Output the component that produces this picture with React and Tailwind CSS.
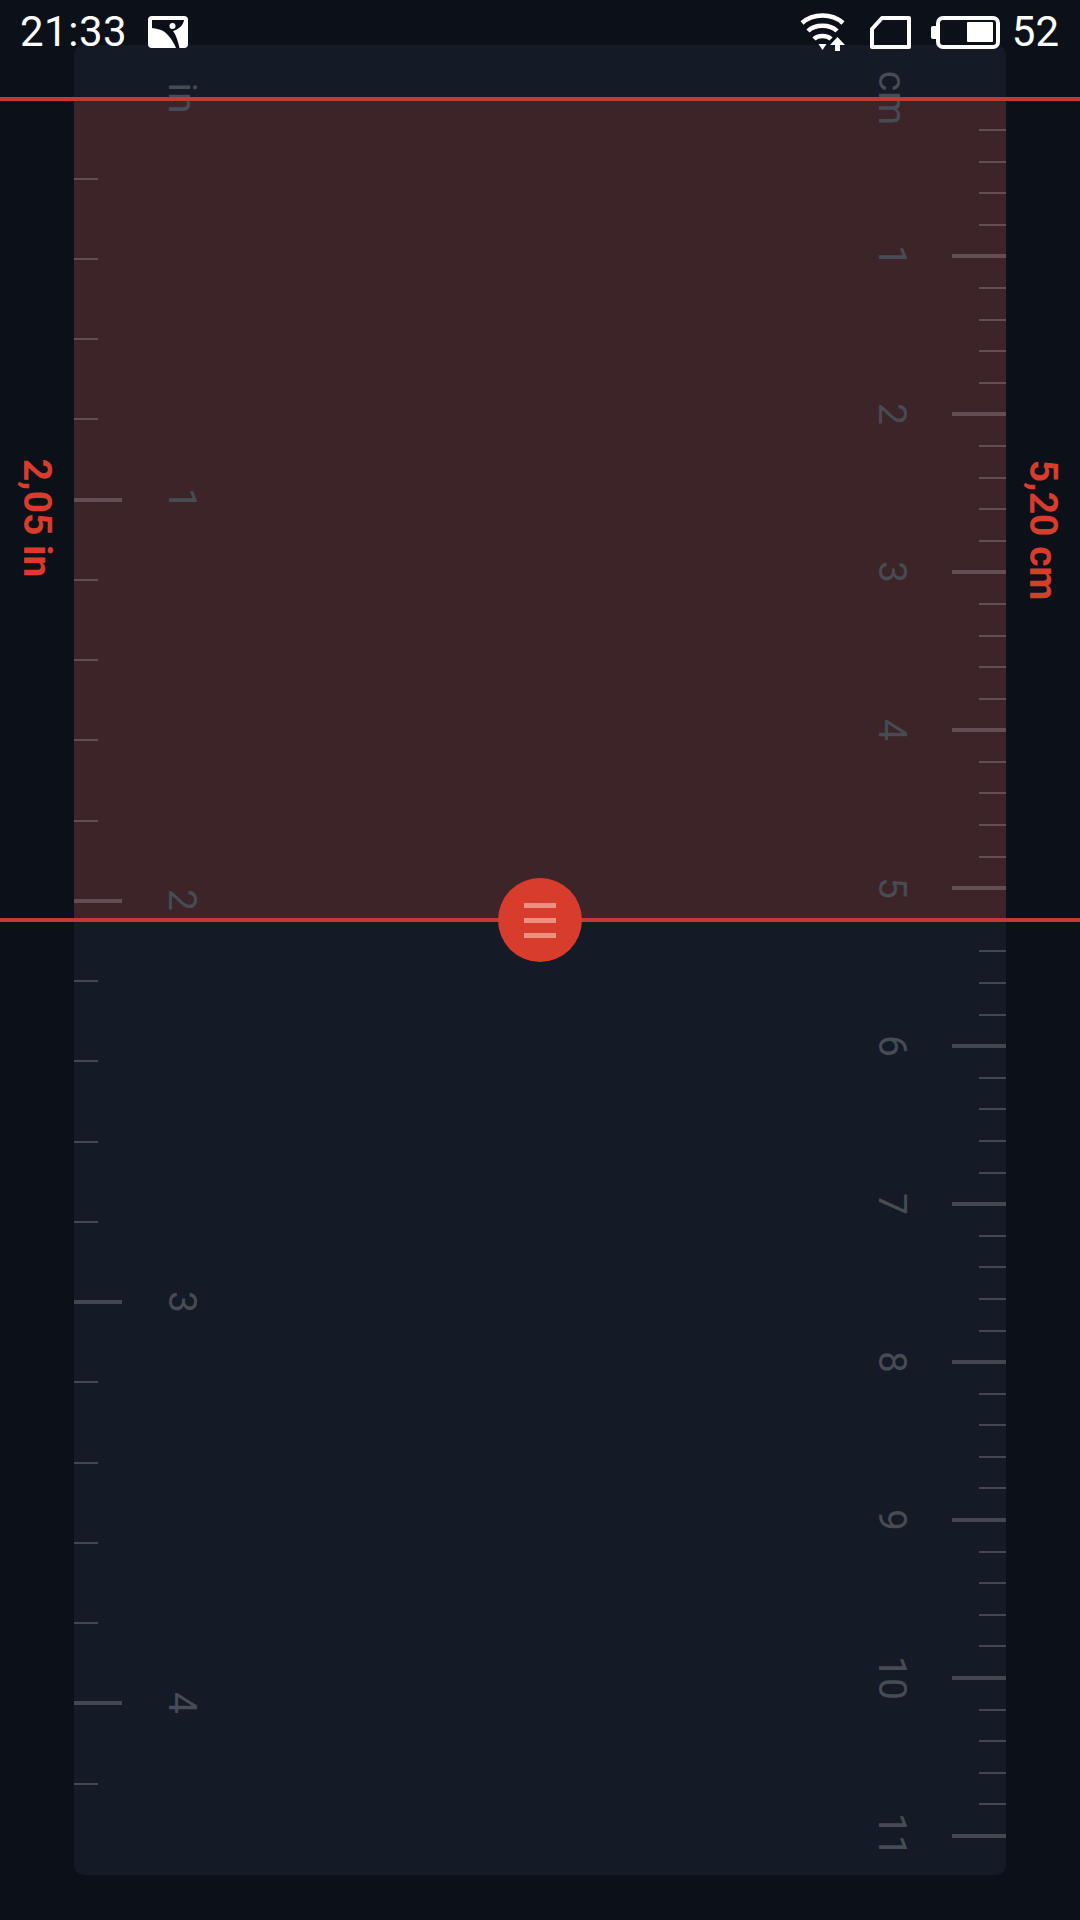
import React from 'react';

const PX_PER_IN = 401.2;
const PX_PER_CM = PX_PER_IN / 2.54;
const ZERO_Y = 53; // zero line, measured from the top of the panel

const inchTicks = Array.from({ length: 22 }, (_, i) => i);
const cmTicks = Array.from({ length: 56 }, (_, i) => i);
const inchLabels = ['in', '1', '2', '3', '4'];
const cmLabels = ['cm', '1', '2', '3', '4', '5', '6', '7', '8', '9', '10', '11'];

const ImageIcon = () => (
  <svg width="40" height="32" viewBox="0 0 40 32" className="block">
    <rect width="40" height="32" rx="4" fill="#fff" />
    <path d="M4 4 H36 C35.500 9 31 13 25 15 C28 19 30 25 31.500 32 H28 C25 25 20 17 13 14 C10 13 7 12.500 4 12 Z" fill="#0b0f17" />
    <circle cx="24.500" cy="10" r="3" fill="#fff" />
  </svg>
);

const WifiIcon = () => (
  <svg width="46" height="38" viewBox="0 0 46 38" className="block" fill="none" stroke="#fff" strokeWidth="4.500">
    <path d="M2 10 C13 0 32 0 43 10" />
    <path d="M8 18 C15 11 30 11 37 18" />
    <path d="M14 26 C18 22 27 22 31 26" />
    <path d="M18.500 31 L26.500 31 L22.500 37 Z" fill="#fff" stroke="none" />
    <path d="M37.500 24 L45 32 L40 32 L40 38 L35 38 L35 32 L30 32 Z" fill="#fff" stroke="none" />
  </svg>
);

const SdIcon = () => (
  <svg width="41" height="33" viewBox="0 0 41 33" className="block" fill="none" stroke="#fff" strokeWidth="4">
    <path d="M2 31 L2 13 L12 2 L39 2 L39 31 Z" strokeLinejoin="round" />
  </svg>
);

const BatteryIcon = () => (
  <div className="flex items-center">
    <div className="w-[5px] h-[13px] bg-white rounded-l-[2px]" />
    <div className="w-[64px] h-[33px] border-[4px] border-white rounded-[7px] flex justify-end items-center pr-[3px]">
      <div className="w-[26px] h-[20px] bg-white rounded-[1px]" />
    </div>
  </div>
);

const StatusBar = () => (
  <div className="absolute top-0 left-0 right-0 h-[66px] pl-[20px] pr-[21px] flex items-center justify-between text-white text-[42px] leading-none z-20 pb-[2px]">
    <div className="flex items-center gap-[21px]">
      <span className="tracking-[0.5px]">21:33</span>
      <ImageIcon />
    </div>
    <div className="flex items-center">
      <WifiIcon />
      <div className="ml-[24px]"><SdIcon /></div>
      <div className="ml-[20px]"><BatteryIcon /></div>
      <span className="ml-[12px]">52</span>
    </div>
  </div>
);

const Tick = ({ y, className }) => (
  <div className={`absolute ${className}`} style={{ top: y }} />
);

const RulerLabel = ({ y, className, children }) => (
  <span
    className={`absolute -translate-x-1/2 -translate-y-1/2 rotate-90 text-[39px] leading-none font-normal text-[#474b54] ${className}`}
    style={{ top: y }}
  >
    {children}
  </span>
);

const SideValue = ({ className, children }) => (
  <span className={`absolute -translate-x-1/2 -translate-y-1/2 rotate-90 whitespace-nowrap text-[39px] leading-none font-bold text-[#d83c2c] ${className}`}>
    {children}
  </span>
);

export default function App() {
  return (
    <div className="relative w-[1080px] h-[1920px] overflow-hidden bg-[#0c1018] font-['Roboto',sans-serif]">
      <StatusBar />

      <div className="h-full pt-[45px] pb-[45px] px-[74px]">
        <div className="relative h-full rounded-[10px] bg-[#141a26] overflow-hidden">
          {/* selected range */}
          <div className="absolute left-0 right-0 top-[53px] h-[822px] bg-[#3c2428]" />

          {inchTicks.map((i) => (
            <Tick
              key={i}
              y={ZERO_Y + (i * PX_PER_IN) / 5 - (i % 5 === 0 ? 1.5 : 0.5)}
              className={i % 5 === 0 ? 'left-0 w-[48px] h-[4px] bg-white/20' : 'left-0 w-[24px] h-[2px] bg-white/20'}
            />
          ))}
          {cmTicks.map((i) => (
            <Tick
              key={i}
              y={ZERO_Y + (i * PX_PER_CM) / 5 - (i % 5 === 0 ? 1.5 : 0.5)}
              className={i % 5 === 0 ? 'right-0 w-[54px] h-[4px] bg-white/20' : 'right-0 w-[27px] h-[2px] bg-white/20'}
            />
          ))}

          {inchLabels.map((t, i) => (
            <RulerLabel key={t} y={ZERO_Y + i * PX_PER_IN} className="left-[107px]">{t}</RulerLabel>
          ))}
          {cmLabels.map((t, i) => (
            <RulerLabel key={t} y={ZERO_Y + i * PX_PER_CM} className="left-[817px] whitespace-nowrap">{t}</RulerLabel>
          ))}
        </div>
      </div>

      {/* measure lines */}
      <div className="absolute left-0 right-0 top-[97px] h-[4px] bg-[#c23a30]" />
      <div className="absolute left-0 right-0 top-[918px] h-[4px] bg-[#c23a30]" />

      <SideValue className="left-[36px] top-[518px]">2,05 in</SideValue>
      <SideValue className="left-[1042px] top-[530px]">5,20 cm</SideValue>

      {/* drag handle */}
      <div className="absolute left-[498px] top-[878px] w-[84px] h-[84px] rounded-full bg-[#d83c2c] flex flex-col items-center justify-center gap-[10px]">
        <div className="w-[32px] h-[5px] bg-[#ef8f82]" />
        <div className="w-[32px] h-[5px] bg-[#ef8f82]" />
        <div className="w-[32px] h-[5px] bg-[#ef8f82]" />
      </div>
    </div>
  );
}
